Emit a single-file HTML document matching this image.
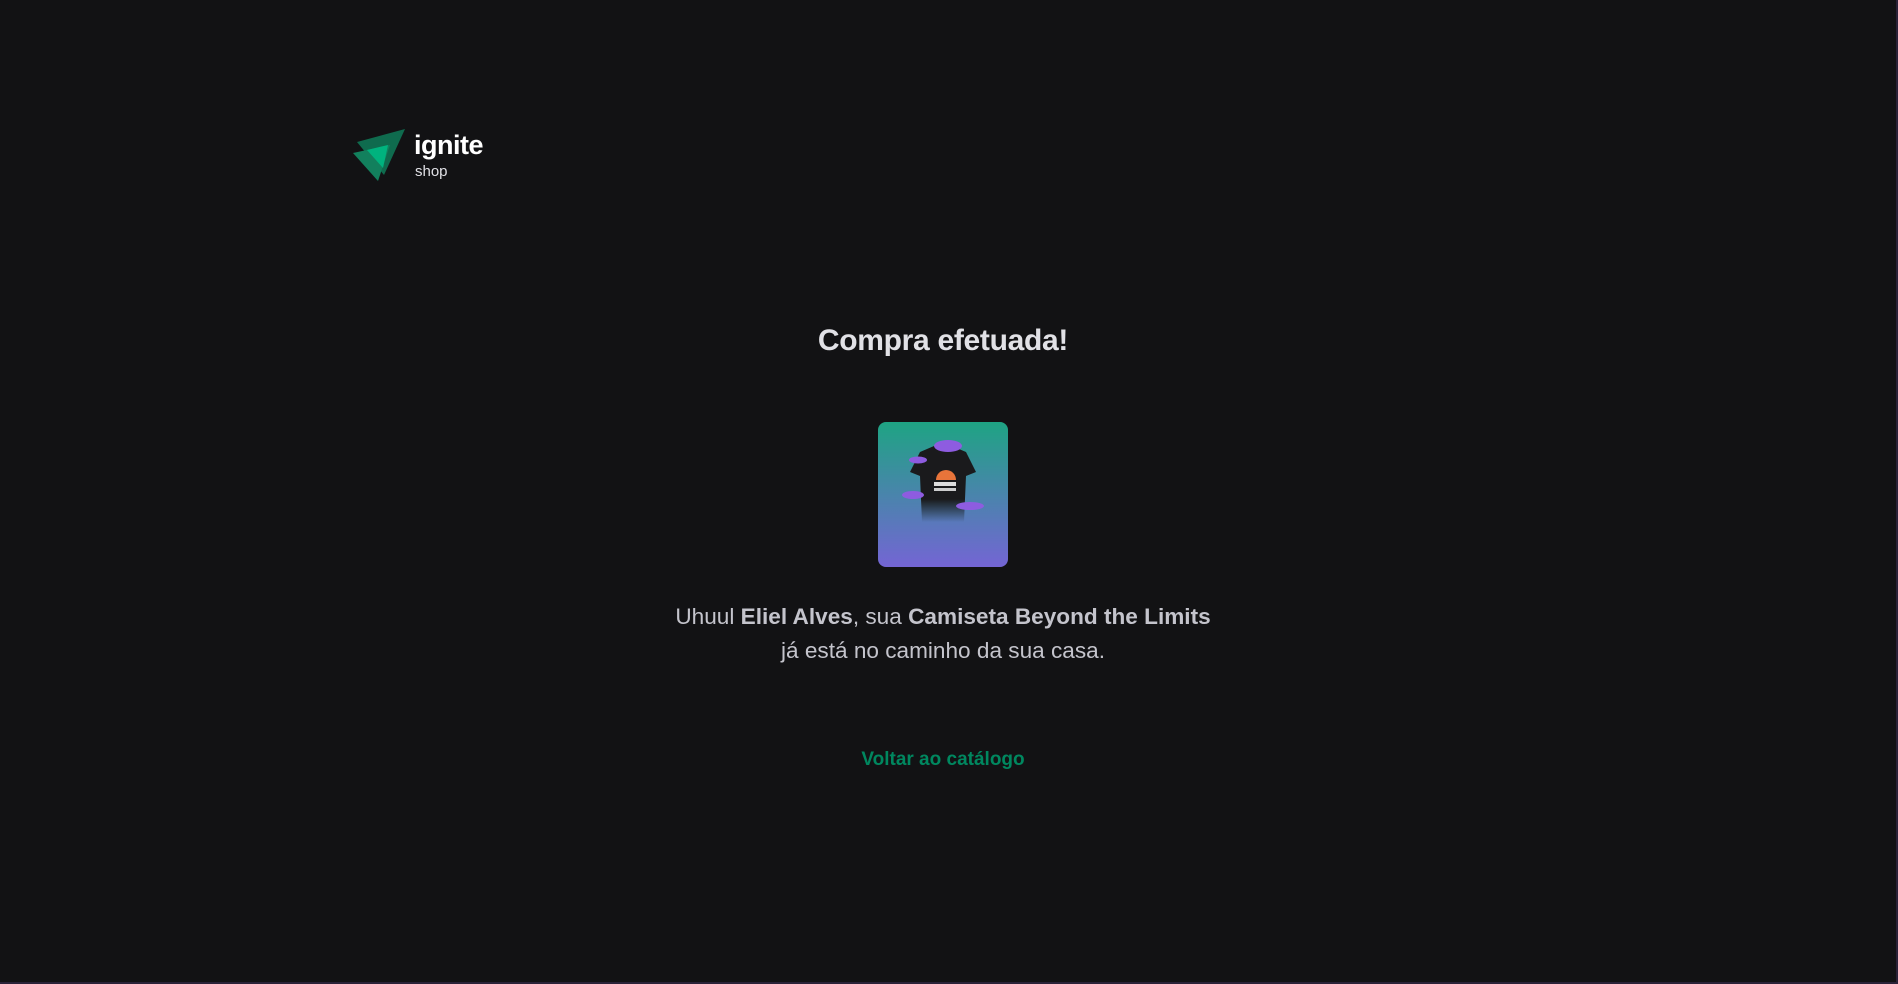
<!DOCTYPE html>
<html><head><meta charset="utf-8"><style>
html,body{margin:0;padding:0;width:1898px;height:984px;background:#121214;overflow:hidden;font-family:"Liberation Sans",sans-serif;}
.edge{position:absolute;right:0;top:0;width:2px;height:984px;background:#2a2238}
.edgeb{position:absolute;left:0;bottom:0;width:1898px;height:2px;background:#2a2238}
.logo{position:absolute;left:345px;top:120px}
.t1{position:absolute;left:414px;top:130px;color:#fff;font-weight:bold;font-size:27px;letter-spacing:-0.5px}
.t2{position:absolute;left:415px;top:163px;color:#e1e1e6;font-size:15px}
h1{position:absolute;left:0;width:1886px;top:324px;margin:0;text-align:center;color:#e1e1e6;font-size:30px;font-weight:bold;letter-spacing:-0.3px}
.img{position:absolute;left:878px;top:422px;width:130px;height:145px;border-radius:8px;background:linear-gradient(180deg,#1ea483 0%,#7465d4 100%);overflow:hidden}
p{position:absolute;left:0;width:1886px;top:600px;margin:0;text-align:center;color:#c4c4cc;font-size:22.6px;line-height:34px}
a{position:absolute;left:0;width:1886px;top:749px;text-align:center;color:#00875f;font-weight:bold;font-size:19px;text-decoration:none}
</style></head><body>
<div class="edge"></div><div class="edgeb"></div>
<svg class="logo" width="70" height="65" viewBox="0 0 70 65">
<polygon points="12,22 60,9 39,55" fill="#0f6b4e"/>
<polygon points="8,33 45,25 33,61" fill="#12805d"/>
<polygon points="22,30 43,25 38,48" fill="#00b37e"/>
</svg>
<div class="t1">ignite</div><div class="t2">shop</div>
<h1>Compra efetuada!</h1>
<div class="img">
<svg width="130" height="145" viewBox="0 0 130 145">
<defs><linearGradient id="f" x1="0" y1="0" x2="0" y2="1"><stop offset="0.7" stop-color="#1a1a1c"/><stop offset="1" stop-color="#1a1a1c" stop-opacity="0"/></linearGradient></defs>
<path d="M42 30 L56 24 Q65 30 74 24 L88 30 L98 50 L88 54 L86 100 L44 100 L42 54 L32 50 Z" fill="url(#f)"/>
<path d="M58 58 a10 10 0 0 1 20 0 z" fill="#e8743a"/>
<rect x="56" y="60" width="22" height="4" fill="#ddd"/><rect x="56" y="66" width="22" height="3" fill="#ccc"/>
<ellipse cx="70" cy="24" rx="14" ry="6" fill="#8e5ce0"/>
<ellipse cx="40" cy="38" rx="9" ry="3.5" fill="#8e5ce0"/>
<ellipse cx="35" cy="73" rx="11" ry="4" fill="#8e5ce0"/>
<ellipse cx="92" cy="84" rx="14" ry="4" fill="#8e5ce0"/>
</svg>
</div>
<p>Uhuul <b>Eliel Alves</b>, sua <b>Camiseta Beyond the Limits</b><br>já está no caminho da sua casa.</p>
<a href="#">Voltar ao catálogo</a>
</body></html>
